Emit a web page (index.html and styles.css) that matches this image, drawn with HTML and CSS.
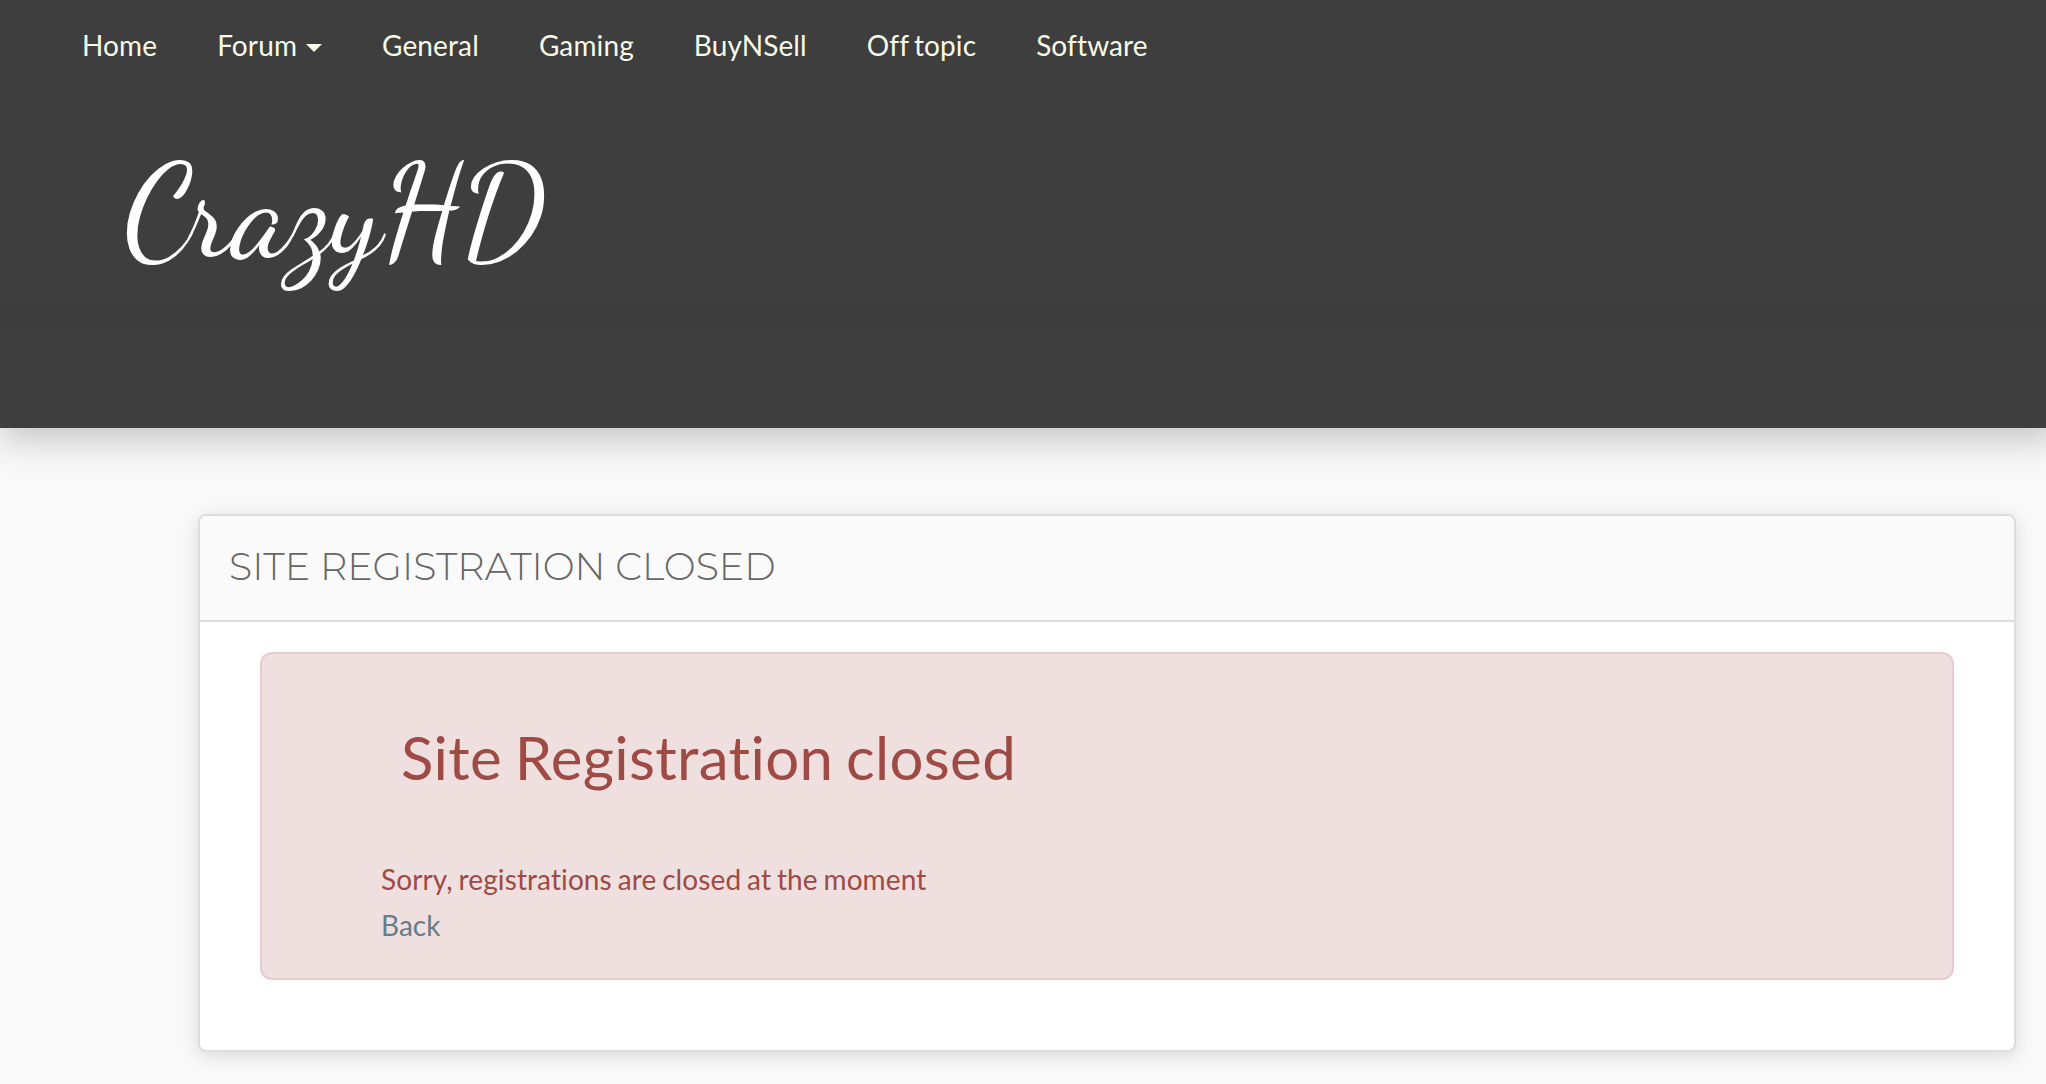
FILE: index.html
```html
<!DOCTYPE html>
<html lang="en">
<head>
<meta charset="utf-8">
<title>CrazyHD</title>
<link rel="stylesheet" href="styles.css">
</head>
<body>
<header class="site-header">
  <div class="masthead">
    <nav class="nav">
      <a>Home</a>
      <a>Forum<span class="caret"></span></a>
      <a>General</a>
      <a>Gaming</a>
      <a>BuyNSell</a>
      <a>Off topic</a>
      <a>Software</a>
    </nav>
    <div class="logo">CrazyHD</div>
  </div>
</header>
<main class="panel">
  <h4 class="panel-title">Site Registration closed</h4>
  <div class="panel-body">
    <section class="alert">
      <h1 class="alert-title">Site Registration closed</h1>
      <p class="alert-text">Sorry, registrations are closed at the moment</p>
      <a class="alert-link">Back</a>
    </section>
  </div>
</main>
</body>
</html>
```

FILE: styles.css
```css
* { box-sizing: border-box; }
body {
  margin: 0;
  background: #f9f9f9;
  font-family: Lato, sans-serif;
  font-size: 28px;
  line-height: 46px;
  font-variant-ligatures: none;
  min-height: 1084px;
}
.site-header {
  height: 428px;
  background: #3e3e3e;
  box-shadow: 6px 6px 34px 6px rgba(0, 0, 0, 0.21);
}
.masthead {
  height: 328px;
  background: linear-gradient(to bottom, #3e3e3e 305px, #3b3b3b 328px);
}
.nav {
  display: flex;
  gap: 60px;
  height: 140px;
  padding: 22px 0 0 82px;
  color: #f7fae9;
  letter-spacing: 0.12px;
  word-spacing: -2px;
}
.nav a { display: flex; align-items: center; height: 46px; white-space: nowrap; }
.caret {
  margin: 5px 0 0 9px;
  border: 8px solid transparent;
  border-top-color: #f7fae9;
  border-bottom: 0;
}
.logo {
  padding-left: 124px;
  color: #fff;
  font: 400 130px/144px "Dancing Script", cursive;
}
.panel {
  width: 1818px;
  height: 538px;
  margin: 86px 0 0 198px;
  background: #fff;
  border: 2px solid #ddd;
  border-radius: 8px;
  box-shadow: 0 4px 18px rgba(0, 0, 0, 0.13);
}
.panel-title {
  height: 106px;
  margin: 0;
  padding: 28px 29px;
  background: #fafafa;
  border-bottom: 2px solid #ddd;
  border-radius: 6px 6px 0 0;
  color: #666;
  font: 300 38px/46px Montserrat, sans-serif;
  text-transform: uppercase;
}
.panel-body { padding: 30px 60px; }
.alert {
  height: 328px;
  padding: 65px 120px 0 119px;
  background: #efdfde;
  border: 2px solid #e6cbd0;
  border-radius: 12px;
  color: #9e4a45;
}
.alert-title {
  margin: 0 0 61px;
  padding-left: 20px;
  font-weight: 400;
  font-size: 60px;
  line-height: 76px;
  letter-spacing: 0.33px;
  word-spacing: -3px;
}
.alert-text {
  margin: 0;
  letter-spacing: 0.1px;
  word-spacing: -1.4px;
}
.alert-link { display: block; color: #667d89; }
```
